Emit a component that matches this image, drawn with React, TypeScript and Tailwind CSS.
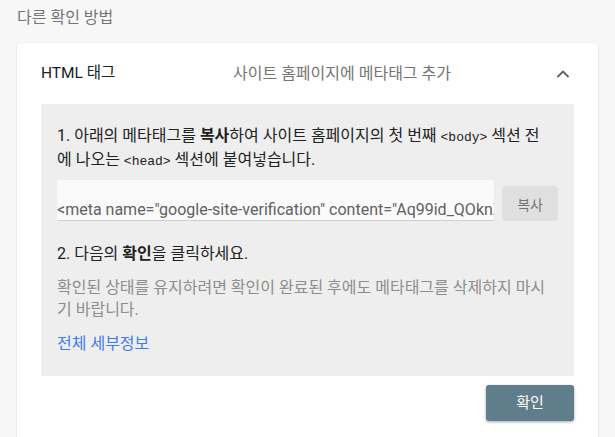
import { ChevronUp } from "lucide-react";

const FONT = "font-['Roboto','Noto_Sans_CJK_KR',sans-serif]";

function MonoTag({ children }: { children: string }) {
  return (
    <span className="font-['Liberation_Mono',monospace] text-[13px] leading-none">{children}</span>
  );
}

export default function App() {
  return (
    <div className={`${FONT} min-h-[437px] bg-[#f7f7f7] px-[17px] pt-[6px]`}>
      <h2 className="text-[16px] leading-[24px] text-[#757575]">다른 확인 방법</h2>

      <div className="mt-[13px] min-h-[400px] rounded-sm bg-white shadow-[0_1px_2px_rgba(0,0,0,0.18)]">
        {/* header */}
        <div className="flex h-[61px] items-center pl-[24px] pr-[25px]">
          <span className="w-[192px] text-[15.5px] text-[#212121]">HTML 태그</span>
          <span className="flex-1 text-[16px] text-[#757575]">사이트 홈페이지에 메타태그 추가</span>
          <ChevronUp className="h-[20px] w-[20px] text-[#616161]" strokeWidth={2.2} />
        </div>

        {/* body */}
        <div className="mx-[24px] bg-[#eeeeee] px-[16px] pb-[21px] pt-[20px]">
          <p className="text-[16px] leading-[24px] text-[#212121]">
            1. 아래의 메타태그를 <b className="font-bold">복사</b>하여 사이트 홈페이지의 첫 번째{" "}
            <MonoTag>&lt;body&gt;</MonoTag> 섹션 전
            <br />
            에 나오는 <MonoTag>&lt;head&gt;</MonoTag> 섹션에 붙여넣습니다.
          </p>

          <div className="mt-[8px] flex items-end gap-[8px]">
            <div className="h-[41px] w-[439px] overflow-hidden border-b border-[#cfcfcf] bg-[#fafafa] pt-[19px]">
              <div className="whitespace-nowrap text-[16px] leading-[22px] text-[#616161]">
                &lt;meta name="google-site-verification" content="Aq99id_QOknXy3gkF1vW8Ah2mP0cLz4rTqB7sE" /&gt;
              </div>
            </div>
            <button className="h-[35px] w-[56px] rounded-sm bg-[#e0e0e0] pt-[3px] text-[14px] text-[#757575]">
              복사
            </button>
          </div>

          <p className="mt-[21px] text-[16px] leading-[24px] text-[#212121]">
            2. 다음의 <b className="font-bold">확인</b>을 클릭하세요.
          </p>

          <p className="mt-[11px] text-[16px] leading-[22px] text-[#8d8d8d]">
            확인된 상태를 유지하려면 확인이 완료된 후에도 메타태그를 삭제하지 마시
            <br />
            기 바랍니다.
          </p>

          <a href="#" className="mt-[12px] block text-[16px] leading-[22px] text-[#3d7cf0]">
            전체 세부정보
          </a>
        </div>

        {/* footer */}
        <div className="flex justify-end px-[24px] pt-[9px]">
          <button className="h-[36px] w-[88px] rounded-[3px] bg-[#607d8b] text-[15px] text-white shadow-[0_1px_3px_rgba(0,0,0,0.35)]">
            확인
          </button>
        </div>
      </div>
    </div>
  );
}
